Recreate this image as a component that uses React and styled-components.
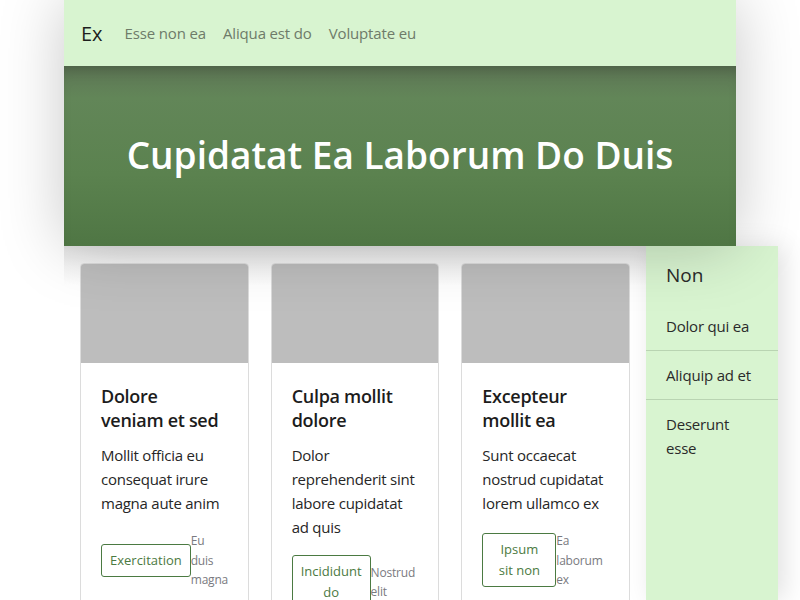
import React from 'react';
import styled, { createGlobalStyle } from 'styled-components';

const GlobalStyle = createGlobalStyle`
  html, body {
    margin: 0;
    padding: 0;
    background: #fff;
    font-family: "Segoe UI", "Open Sans", sans-serif;
    color: #212121;
    overflow: hidden;
  }
  * { box-sizing: border-box; }
`

const Page = styled.div`
  width: 800px;
  height: 600px;
  overflow: hidden;
`
const Header = styled.header`
  width: 672px;
  margin-left: 64px;
  position: relative;
  z-index: 2;
  box-shadow: 0 0 60px rgba(0, 0, 0, 0.22);
`
const Nav = styled.nav`
  height: 66px;
  background: #d8f4d0;
  display: flex;
  align-items: center;
  padding: 0 17px;
`
const Brand = styled.span`
  font-size: 20px;
  color: #1e1e1e;
  margin-right: 22px;
`
const NavLink = styled.a`
  font-size: 15px;
  letter-spacing: -0.15px;
  color: #6e7b69;
  margin-right: 17px;
`
const Hero = styled.section`
  height: 180px;
  background: linear-gradient(#5e7656 0%, #628658 18%, #5b824f 60%, #4f7644 100%);
  box-shadow: inset 0 12px 16px -10px rgba(0, 0, 0, 0.25);
  display: flex;
  align-items: center;
  justify-content: center;
  padding-bottom: 4px;
`
const Title = styled.h1`
  margin: 0;
  color: #fff;
  font-size: 37px;
  font-weight: 600;
`
const Body = styled.div`
  display: flex;
  margin-left: 64px;
  height: 354px;
`
const Cards = styled.div`
  width: 582px;
  display: flex;
  gap: 22px;
  padding: 17px 16px 0 16px;
  background: linear-gradient(#e4e4e4 0px, #f4f4f4 20px, #fff 40px);
`
const Card = styled.div`
  flex: 1;
  background: #fff;
  border: 1px solid #dcdcdc;
  border-radius: 4px;
  overflow: hidden;
  min-height: 400px;
`
const CardImage = styled.div`
  height: 99px;
  background: #bdbdbd;
`
const CardBody = styled.div`
  padding: 21px 20px 20px;
`
const CardTitle = styled.h2`
  margin: 0 0 11px;
  font-size: 18px;
  letter-spacing: -0.3px;
  font-weight: 600;
  line-height: 24px;
  color: #1c1c1c;
  text-wrap: balance;
`
const CardText = styled.p`
  margin: 0 0 16px;
  font-size: 15px;
  letter-spacing: -0.25px;
  line-height: 24px;
  color: #262626;
`
const Actions = styled.div`
  display: flex;
  align-items: center;
`
const Button = styled.button`
  font-family: inherit;
  font-size: 13px;
  line-height: 21px;
  color: #4b7a42;
  background: transparent;
  border: 1px solid #4b7a42;
  border-radius: 3px;
  padding: 5px 8px;
  text-wrap: balance;
`
const Small = styled.span`
  font-size: 12px;
  letter-spacing: -0.2px;
  line-height: 19.5px;
  color: #7a7a80;
`
const Sidebar = styled.aside`
  width: 132px;
  background: #d8f4d0;
  box-shadow: 6px 0 24px rgba(0, 0, 0, 0.12);
  position: relative;
  z-index: 1;
`
const SideHead = styled.div`
  font-size: 19px;
  color: #2a2a2a;
  padding: 16px 20px 14px;
`
const SideItem = styled.div`
  font-size: 15px;
  line-height: 24px;
  letter-spacing: -0.2px;
  color: #2a2a2a;
  padding: 12px 20px;
  border-bottom: ${p => (p.$last ? 'none' : '1px solid #b9d4b2')};
`

const cards = [
  { title: 'Dolore veniam et sed', text: 'Mollit officia eu consequat irure magna aute anim', btn: 'Exercitation', small: 'Eu duis magna' },
  { title: 'Culpa mollit dolore', text: 'Dolor reprehenderit sint labore cupidatat ad quis', btn: 'Incididunt do', small: 'Nostrud elit' },
  { title: 'Excepteur mollit ea', text: 'Sunt occaecat nostrud cupidatat lorem ullamco ex', btn: 'Ipsum sit non', small: 'Ea laborum ex' },
];

export default function App() {
  return (
    <Page>
      <GlobalStyle />
      <Header>
        <Nav>
          <Brand>Ex</Brand>
          <NavLink>Esse non ea</NavLink>
          <NavLink>Aliqua est do</NavLink>
          <NavLink>Voluptate eu</NavLink>
        </Nav>
        <Hero>
          <Title>Cupidatat Ea Laborum Do Duis</Title>
        </Hero>
      </Header>
      <Body>
        <Cards>
          {cards.map(c => (
            <Card key={c.title}>
              <CardImage />
              <CardBody>
                <CardTitle>{c.title}</CardTitle>
                <CardText>{c.text}</CardText>
                <Actions>
                  <Button>{c.btn}</Button>
                  <Small>{c.small}</Small>
                </Actions>
              </CardBody>
            </Card>
          ))}
        </Cards>
        <Sidebar>
          <SideHead>Non</SideHead>
          <SideItem>Dolor qui ea</SideItem>
          <SideItem>Aliquip ad et</SideItem>
          <SideItem $last>Deserunt esse</SideItem>
        </Sidebar>
      </Body>
    </Page>
  );
}
